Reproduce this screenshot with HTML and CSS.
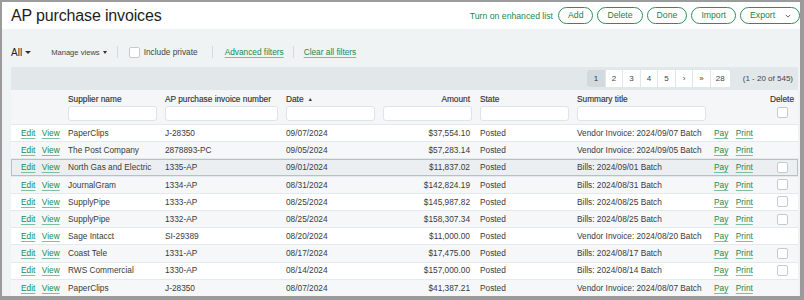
FILE: index.html
```html
<!DOCTYPE html>
<html>
<head>
<meta charset="utf-8">
<link rel="stylesheet" href="styles.css">
</head>
<body>
<div class="app">
  <header class="topbar">
    <h1 class="title">AP purchase invoices</h1>
    <div class="actions">
      <a class="plain-link">Turn on enhanced list</a>
      <button class="pill">Add</button>
      <button class="pill">Delete</button>
      <button class="pill">Done</button>
      <button class="pill">Import</button>
      <button class="pill pill-export">Export<svg class="chev" viewBox="0 0 8 5" width="6" height="4"><path d="M1 1 L4 4 L7 1" fill="none" stroke="currentColor" stroke-width="1.2"/></svg></button>
    </div>
  </header>

  <div class="filters">
    <span class="view-all">All<span class="caret caret-lg"></span></span>
    <span class="manage">Manage views<span class="caret"></span></span>
    <span class="sep sep-1"></span>
    <span class="chk chk-private"></span>
    <span class="include">Include private</span>
    <span class="sep sep-2"></span>
    <a class="ulink adv">Advanced filters</a>
    <span class="sep sep-3"></span>
    <a class="ulink clear">Clear all filters</a>
  </div>

  <div class="table">
    <div class="pager-bar">
      <div class="pager">
        <span class="pg active">1</span><span class="pg">2</span><span class="pg">3</span><span class="pg">4</span><span class="pg">5</span><span class="pg">›</span><span class="pg">»</span><span class="pg pg-wide">28</span>
      </div>
      <span class="count">(1 - 20 of 545)</span>
    </div>

    <div class="row head">
      <div class="hc"></div>
      <div class="hc"><span class="hl">Supplier name</span><span class="fbox"></span></div>
      <div class="hc"><span class="hl">AP purchase invoice number</span><span class="fbox"></span></div>
      <div class="hc"><span class="hl">Date <span class="sort">▲</span></span><span class="fbox"></span></div>
      <div class="hc hc-num"><span class="hl">Amount</span><span class="fbox"></span></div>
      <div class="hc"><span class="hl">State</span><span class="fbox"></span></div>
      <div class="hc"><span class="hl">Summary title</span><span class="fbox"></span></div>
      <div class="hc"></div>
      <div class="hc hc-del"><span class="hl">Delete</span><span class="chk"></span></div>
    </div>

    <div class="row">
      <div class="c c-ev"><a class="ulink">Edit</a><a class="ulink">View</a></div>
      <div class="c">PaperClips</div><div class="c">J-28350</div><div class="c">09/07/2024</div>
      <div class="c c-num">$37,554.10</div><div class="c">Posted</div><div class="c">Vendor Invoice: 2024/09/07 Batch</div>
      <div class="c c-act"><a class="ulink">Pay</a><a class="ulink">Print</a></div><div class="c c-del"></div>
    </div>
    <div class="row">
      <div class="c c-ev"><a class="ulink">Edit</a><a class="ulink">View</a></div>
      <div class="c">The Post Company</div><div class="c">2878893-PC</div><div class="c">09/05/2024</div>
      <div class="c c-num">$57,283.14</div><div class="c">Posted</div><div class="c">Vendor Invoice: 2024/09/05 Batch</div>
      <div class="c c-act"><a class="ulink">Pay</a><a class="ulink">Print</a></div><div class="c c-del"></div>
    </div>
    <div class="row hover">
      <div class="c c-ev"><a class="ulink">Edit</a><a class="ulink">View</a></div>
      <div class="c">North Gas and Electric</div><div class="c">1335-AP</div><div class="c">09/01/2024</div>
      <div class="c c-num">$11,837.02</div><div class="c">Posted</div><div class="c">Bills: 2024/09/01 Batch</div>
      <div class="c c-act"><a class="ulink">Pay</a><a class="ulink">Print</a></div><div class="c c-del"><span class="chk"></span></div>
    </div>
    <div class="row">
      <div class="c c-ev"><a class="ulink">Edit</a><a class="ulink">View</a></div>
      <div class="c">JournalGram</div><div class="c">1334-AP</div><div class="c">08/31/2024</div>
      <div class="c c-num">$142,824.19</div><div class="c">Posted</div><div class="c">Bills: 2024/08/31 Batch</div>
      <div class="c c-act"><a class="ulink">Pay</a><a class="ulink">Print</a></div><div class="c c-del"><span class="chk"></span></div>
    </div>
    <div class="row">
      <div class="c c-ev"><a class="ulink">Edit</a><a class="ulink">View</a></div>
      <div class="c">SupplyPipe</div><div class="c">1333-AP</div><div class="c">08/25/2024</div>
      <div class="c c-num">$145,987.82</div><div class="c">Posted</div><div class="c">Bills: 2024/08/25 Batch</div>
      <div class="c c-act"><a class="ulink">Pay</a><a class="ulink">Print</a></div><div class="c c-del"><span class="chk"></span></div>
    </div>
    <div class="row">
      <div class="c c-ev"><a class="ulink">Edit</a><a class="ulink">View</a></div>
      <div class="c">SupplyPipe</div><div class="c">1332-AP</div><div class="c">08/25/2024</div>
      <div class="c c-num">$158,307.34</div><div class="c">Posted</div><div class="c">Bills: 2024/08/25 Batch</div>
      <div class="c c-act"><a class="ulink">Pay</a><a class="ulink">Print</a></div><div class="c c-del"><span class="chk"></span></div>
    </div>
    <div class="row">
      <div class="c c-ev"><a class="ulink">Edit</a><a class="ulink">View</a></div>
      <div class="c">Sage Intacct</div><div class="c">SI-29389</div><div class="c">08/20/2024</div>
      <div class="c c-num">$11,000.00</div><div class="c">Posted</div><div class="c">Vendor Invoice: 2024/08/20 Batch</div>
      <div class="c c-act"><a class="ulink">Pay</a><a class="ulink">Print</a></div><div class="c c-del"></div>
    </div>
    <div class="row">
      <div class="c c-ev"><a class="ulink">Edit</a><a class="ulink">View</a></div>
      <div class="c">Coast Tele</div><div class="c">1331-AP</div><div class="c">08/17/2024</div>
      <div class="c c-num">$17,475.00</div><div class="c">Posted</div><div class="c">Bills: 2024/08/17 Batch</div>
      <div class="c c-act"><a class="ulink">Pay</a><a class="ulink">Print</a></div><div class="c c-del"><span class="chk"></span></div>
    </div>
    <div class="row">
      <div class="c c-ev"><a class="ulink">Edit</a><a class="ulink">View</a></div>
      <div class="c">RWS Commercial</div><div class="c">1330-AP</div><div class="c">08/14/2024</div>
      <div class="c c-num">$157,000.00</div><div class="c">Posted</div><div class="c">Bills: 2024/08/14 Batch</div>
      <div class="c c-act"><a class="ulink">Pay</a><a class="ulink">Print</a></div><div class="c c-del"><span class="chk"></span></div>
    </div>
    <div class="row">
      <div class="c c-ev"><a class="ulink">Edit</a><a class="ulink">View</a></div>
      <div class="c">PaperClips</div><div class="c">J-28350</div><div class="c">08/07/2024</div>
      <div class="c c-num">$41,387.21</div><div class="c">Posted</div><div class="c">Vendor Invoice: 2024/08/07 Batch</div>
      <div class="c c-act"><a class="ulink">Pay</a><a class="ulink">Print</a></div><div class="c c-del"></div>
    </div>
  </div>
</div>
</body>
</html>
```

FILE: styles.css
```css
* { box-sizing: border-box; }
html, body { margin: 0; padding: 0; }
body {
  width: 804px;
  height: 300px;
  background: #9b9b9b;
  padding: 2px 4px 4px 2px;
  font-family: "Liberation Sans", Arial, sans-serif;
  color: #333;
  overflow: hidden;
}
.app {
  width: 798px;
  height: 294px;
  background: #f0f3f4;
  overflow: hidden;
}
.topbar {
  height: 27px;
  background: #fff;
  display: flex;
  align-items: center;
  justify-content: space-between;
  padding: 0 0 0 9px;
}
.title {
  margin: 0;
  font-size: 16px;
  font-weight: normal;
  color: #1d1d1d;
  letter-spacing: -0.15px;
}
.actions {
  display: flex;
  align-items: center;
  gap: 4px;
}
.plain-link {
  color: #168a4f;
  font-size: 8.7px;
  margin-right: 1px;
}
.pill {
  height: 17.5px;
  border: 1.3px solid #2b8f5a;
  border-radius: 9px;
  background: #fff;
  color: #1d7f48;
  font-family: inherit;
  font-size: 8.7px;
  padding: 0 9px;
  display: flex;
  align-items: center;
  line-height: 1;
}
.pill-export {
  width: 60px;
  padding: 0 0 0 9px;
}
.chev {
  margin-left: 10px;
  color: #555;
}

.filters {
  height: 24px;
  margin: 11px 0 3px 0;
  padding-left: 9px;
  display: flex;
  align-items: center;
  font-size: 8.3px;
  color: #444;
}
.view-all {
  font-size: 10px;
  color: #222;
  display: flex;
  align-items: center;
}
.caret {
  display: inline-block;
  width: 0;
  height: 0;
  border-left: 2.5px solid transparent;
  border-right: 2.5px solid transparent;
  border-top: 3px solid #333;
  margin-left: 3px;
}
.caret-lg {
  border-left-width: 3px;
  border-right-width: 3px;
  border-top-width: 3.5px;
  margin-left: 3px;
}
.manage {
  font-size: 7.6px;
  margin-left: 20px;
  display: flex;
  align-items: center;
}
.sep {
  width: 1px;
  height: 12px;
  background: #d5dadd;
}
.sep-1 { margin-left: 10px; }
.chk {
  display: inline-block;
  width: 11px;
  height: 11px;
  border: 1px solid #c5cacd;
  border-radius: 2px;
  background: #fff;
}
.chk-private { margin-left: 11px; }
.include { margin-left: 4px; }
.sep-2 { margin-left: 14px; }
.ulink {
  color: #168a4f;
  text-decoration: underline;
  text-decoration-color: #7cc09b;
  text-underline-offset: 1.5px;
}
.adv { margin-left: 12px; }
.sep-3 { margin-left: 9px; }
.clear { margin-left: 10px; }

.table {
  margin-left: 9px;
  width: 787px;
  background: #fff;
}
.pager-bar {
  height: 23px;
  background: #e2e8ea;
  display: flex;
  align-items: center;
  justify-content: flex-end;
  padding-right: 5px;
  font-size: 8px;
}
.pager {
  display: flex;
  height: 17px;
  background: #fff;
  border-radius: 2px;
}
.pg {
  width: 17.5px;
  display: flex;
  align-items: center;
  justify-content: center;
  border-left: 1px solid #e1e6e9;
  color: #444;
}
.pg:first-child { border-left: none; border-radius: 2px 0 0 2px; }
.pg.active { background: #d3dadd; color: #333; }
.pg-wide { width: 20px; }
.count {
  margin-left: 13px;
  color: #444;
}

.row {
  display: grid;
  grid-template-columns: 57px 97px 121px 97px 97px 97px 137px 52px 32px;
  height: 17.2px;
  font-size: 8.3px;
  border-top: 1px solid #e4e9eb;
  align-items: center;
  color: #3a3a3a;
}
.row:nth-child(odd) { background: #fff; }
.row:nth-child(even) { background: #f5f7f8; }
.row.head {
  height: 34px;
  background: #f4f6f7;
  border-top: none;
  align-items: start;
  padding-top: 4px;
}
.hc {
  display: flex;
  flex-direction: column;
  padding-right: 8px;
}
.hl {
  height: 11px;
  line-height: 11px;
  color: #333;
  white-space: nowrap;
  -webkit-text-stroke: 0.15px #333;
}
.sort { font-size: 5px; vertical-align: 1px; margin-left: 2px; }
.fbox {
  margin-top: 1px;
  height: 15px;
  background: #fff;
  border: 1px solid #dfe4e7;
  border-radius: 3px;
}
.hc-num .hl { text-align: right; padding-right: 2px; }
.hc-del { padding-right: 4px; }
.hc-del .hl { text-align: right; }
.hc-del .chk { margin: 2px 0 0 11px; }

.c {
  white-space: nowrap;
  line-height: 1;
}
.c-ev { padding-left: 10px; display: flex; gap: 6.5px; }
.c-num { text-align: right; padding-right: 10px; }
.c-act { display: flex; gap: 7.5px; }
.c-del { display: flex; padding-left: 11px; }
.c-del .chk { width: 11px; height: 11px; }
.row.hover {
  background: #eceff1;
  box-shadow: inset 0 0 0 1px #b7c0c5;
}
```
